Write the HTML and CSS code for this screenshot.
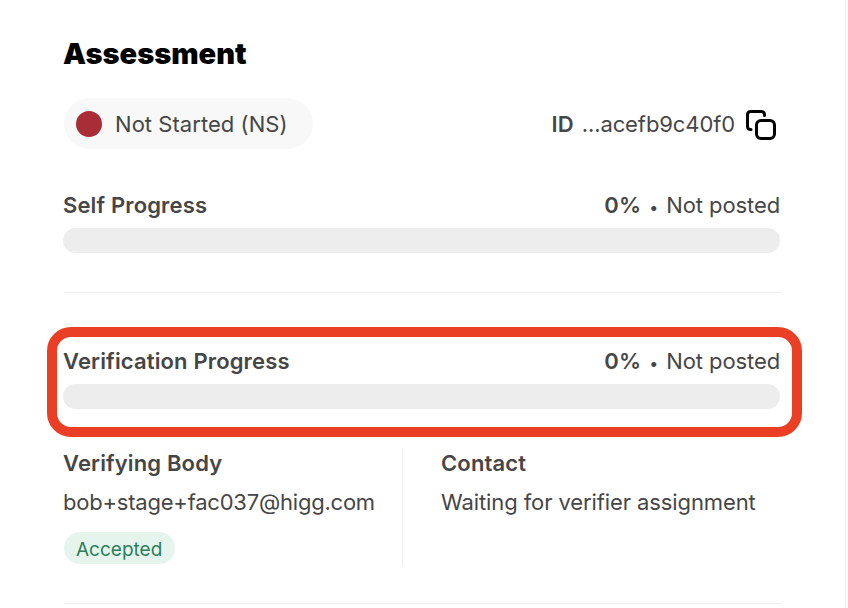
FILE: index.html
```html
<!DOCTYPE html>
<html lang="en">
<head>
    <meta charset="UTF-8">
    <meta name="viewport" content="width=device-width, initial-scale=1.0">
    <title>Assessment</title>
    <link rel="stylesheet" href="styles.css">
</head>
<body>
    <main class="panel">
        <h2 class="title">Assessment</h2>

        <div class="status-row">
            <div class="status-pill">
                <span class="status-dot"></span>
                <span class="status-text">Not Started (NS)</span>
            </div>
            <div class="assessment-id">
                <strong>ID</strong>
                <span>...acefb9c40f0</span>
                <svg class="copy-icon" width="30" height="30" viewBox="0 0 30 30" fill="none" stroke="#000" stroke-width="3" stroke-linecap="round">
                    <rect x="10.500" y="10.500" width="18" height="18" rx="4.500"/>
                    <path d="M5 19.500h-.5A3 3 0 0 1 1.500 16.500V4.500A3 3 0 0 1 4.500 1.500H15.500a3 3 0 0 1 3 3V5.500"/>
                </svg>
            </div>
        </div>

        <section class="progress progress-self">
            <div class="progress-head">
                <strong>Self Progress</strong>
                <span><strong>0%</strong> <span class="sep">•</span> Not posted</span>
            </div>
            <div class="progress-bar"></div>
        </section>

        <hr class="rule rule-first">

        <section class="progress progress-verify">
            <div class="progress-head">
                <strong>Verification Progress</strong>
                <span><strong>0%</strong> <span class="sep">•</span> Not posted</span>
            </div>
            <div class="progress-bar"></div>
            <div class="highlight"></div>
        </section>

        <div class="details">
            <div class="details-col details-body">
                <strong>Verifying Body</strong>
                <span class="email">bob+stage+fac037@higg.com</span>
                <span class="badge">Accepted</span>
            </div>
            <div class="details-col details-contact">
                <strong>Contact</strong>
                <span>Waiting for verifier assignment</span>
            </div>
        </div>

        <hr class="rule rule-last">
    </main>
</body>
</html>
```

FILE: styles.css
```css
html, body {
    margin: 0;
    height: 100%;
    overflow: hidden;
    background: #fafafa;
}
body {
    font-family: Inter, "Liberation Sans", sans-serif;
    font-size: 22px;
    line-height: 28px;
    letter-spacing: -0.1px;
    color: #464646;
}
strong {
    font-weight: 600;
    letter-spacing: 0.15px;
}
.panel {
    box-sizing: border-box;
    width: 846px;
    height: 608px;
    padding: 37px 63px 0 63px;
    background: #fff;
    border-right: 1px solid #efefef;
}
.title {
    margin: 0;
    height: 34px;
    font-size: 29px;
    line-height: 34px;
    font-weight: 900;
    letter-spacing: 0;
    color: #000;
}
.status-row {
    display: flex;
    align-items: center;
    justify-content: space-between;
    margin: 27px 6px 0 1px;
}
.status-pill {
    display: flex;
    align-items: center;
    gap: 13px;
    height: 51px;
    padding: 0 25px 0 12px;
    border-radius: 26px;
    background: #f8f8f8;
}
.status-dot {
    width: 26px;
    height: 26px;
    border-radius: 50%;
    background: #a92d36;
}
.status-text {
    letter-spacing: 0.05px;
}
.assessment-id {
    display: flex;
    align-items: center;
    gap: 8px;
}
.copy-icon {
    margin: 2px 0 0 3px;
}
.progress {
    position: relative;
}
.progress-self {
    margin-top: 42px;
}
.progress-verify {
    margin-top: 54px;
}
.progress-head {
    display: flex;
    justify-content: space-between;
    padding-right: 2px;
}
.sep {
    font-size: 16px;
    line-height: 1;
    margin: 0 2px;
}
.progress-bar {
    height: 25px;
    margin: 9px 2px 0 0;
    border-radius: 13px;
    background: #ededed;
}
.rule {
    margin: 0 0 0 1px;
    border: 0;
    border-top: 1px solid #f0f0f0;
}
.rule-first {
    margin-top: 39px;
}
.highlight {
    position: absolute;
    top: -20px;
    left: -16px;
    right: -20px;
    bottom: -28px;
    border: 10px solid #ea3f25;
    border-radius: 24px;
}
.details {
    display: flex;
    margin-top: 39px;
}
.details-col {
    box-sizing: border-box;
    display: flex;
    flex-direction: column;
    align-items: flex-start;
    gap: 11px;
    height: 117px;
    padding-top: 1px;
}
.details-body {
    width: 340px;
    border-right: 1px solid #f0f0f0;
}
.details-contact {
    padding-left: 38px;
}
.email {
    letter-spacing: -0.22px;
}
.badge {
    margin: 5px 0 0 1px;
    padding: 0 13px 0 12px;
    height: 32px;
    line-height: 35px;
    border-radius: 16px;
    font-size: 19px;
    letter-spacing: 0;
    color: #2f7d59;
    background: #e5f5ee;
}
.rule-last {
    margin-top: 38px;
}
```
